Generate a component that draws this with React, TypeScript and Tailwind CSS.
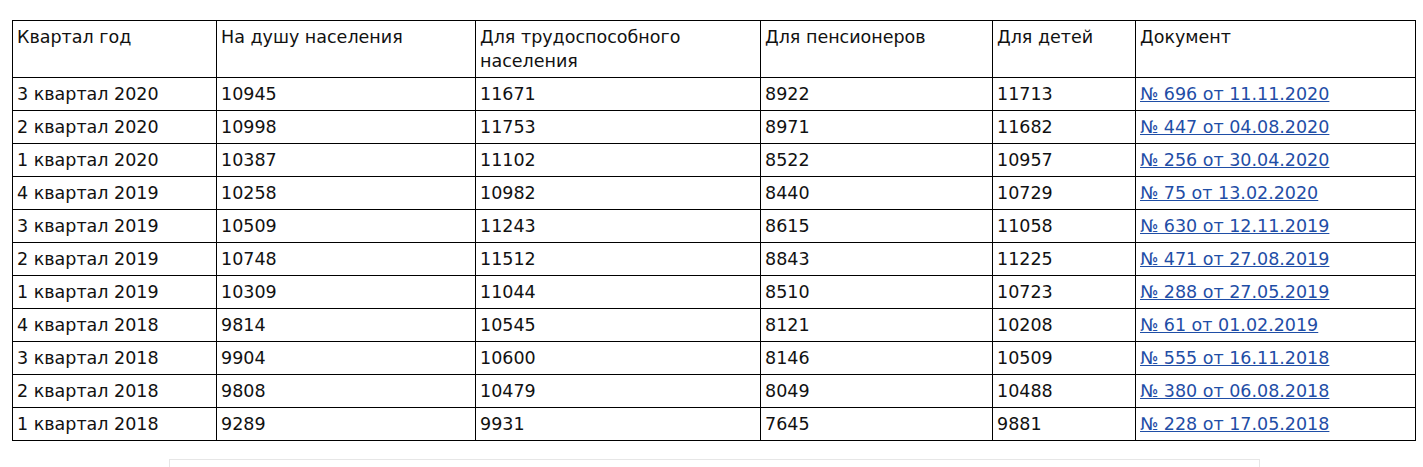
const rows = [
  ["3 квартал 2020", "10945", "11671", "8922", "11713", "№ 696 от 11.11.2020"],
  ["2 квартал 2020", "10998", "11753", "8971", "11682", "№ 447 от 04.08.2020"],
  ["1 квартал 2020", "10387", "11102", "8522", "10957", "№ 256 от 30.04.2020"],
  ["4 квартал 2019", "10258", "10982", "8440", "10729", "№ 75 от 13.02.2020"],
  ["3 квартал 2019", "10509", "11243", "8615", "11058", "№ 630 от 12.11.2019"],
  ["2 квартал 2019", "10748", "11512", "8843", "11225", "№ 471 от 27.08.2019"],
  ["1 квартал 2019", "10309", "11044", "8510", "10723", "№ 288 от 27.05.2019"],
  ["4 квартал 2018", "9814", "10545", "8121", "10208", "№ 61 от 01.02.2019"],
  ["3 квартал 2018", "9904", "10600", "8146", "10509", "№ 555 от 16.11.2018"],
  ["2 квартал 2018", "9808", "10479", "8049", "10488", "№ 380 от 06.08.2018"],
  ["1 квартал 2018", "9289", "9931", "7645", "9881", "№ 228 от 17.05.2018"],
];

const headers = [
  "Квартал год",
  "На душу населения",
  "Для трудоспособного населения",
  "Для пенсионеров",
  "Для детей",
  "Документ",
];

const widths = ["w-[204px]", "w-[259px]", "w-[285px]", "w-[232px]", "w-[143px]", "w-[280px]"];

export default function App() {
  return (
    <div className="bg-white h-[467px] pt-[20px] pl-[12px] font-['DejaVu_Sans',sans-serif] text-[17.5px] text-[#111] overflow-hidden">
      <table className="border-collapse table-fixed w-[1404px]">
        <colgroup>
          {widths.map((w, i) => (
            <col key={i} className={w} />
          ))}
        </colgroup>
        <thead>
          <tr className="h-[57px]">
            {headers.map((h) => (
              <th key={h} className="border border-black align-top text-left font-normal px-[4px] pt-[4px] leading-[24px]">
                {h}
              </th>
            ))}
          </tr>
        </thead>
        <tbody>
          {rows.map((r) => (
            <tr key={r[0]} className="h-[33px]">
              {r.map((c, i) => (
                <td key={i} className="border border-black px-[4px] py-0 align-middle leading-[23px] whitespace-nowrap">
                  {i === 5 ? (
                    <a href="#" className="text-[#1f4ea6] underline">
                      {c}
                    </a>
                  ) : (
                    c
                  )}
                </td>
              ))}
            </tr>
          ))}
        </tbody>
      </table>
      <div className="mt-[18px] ml-[157px] w-[1091px] h-[12px] border-t border-x border-[#e6e6e6]" />
    </div>
  );
}
